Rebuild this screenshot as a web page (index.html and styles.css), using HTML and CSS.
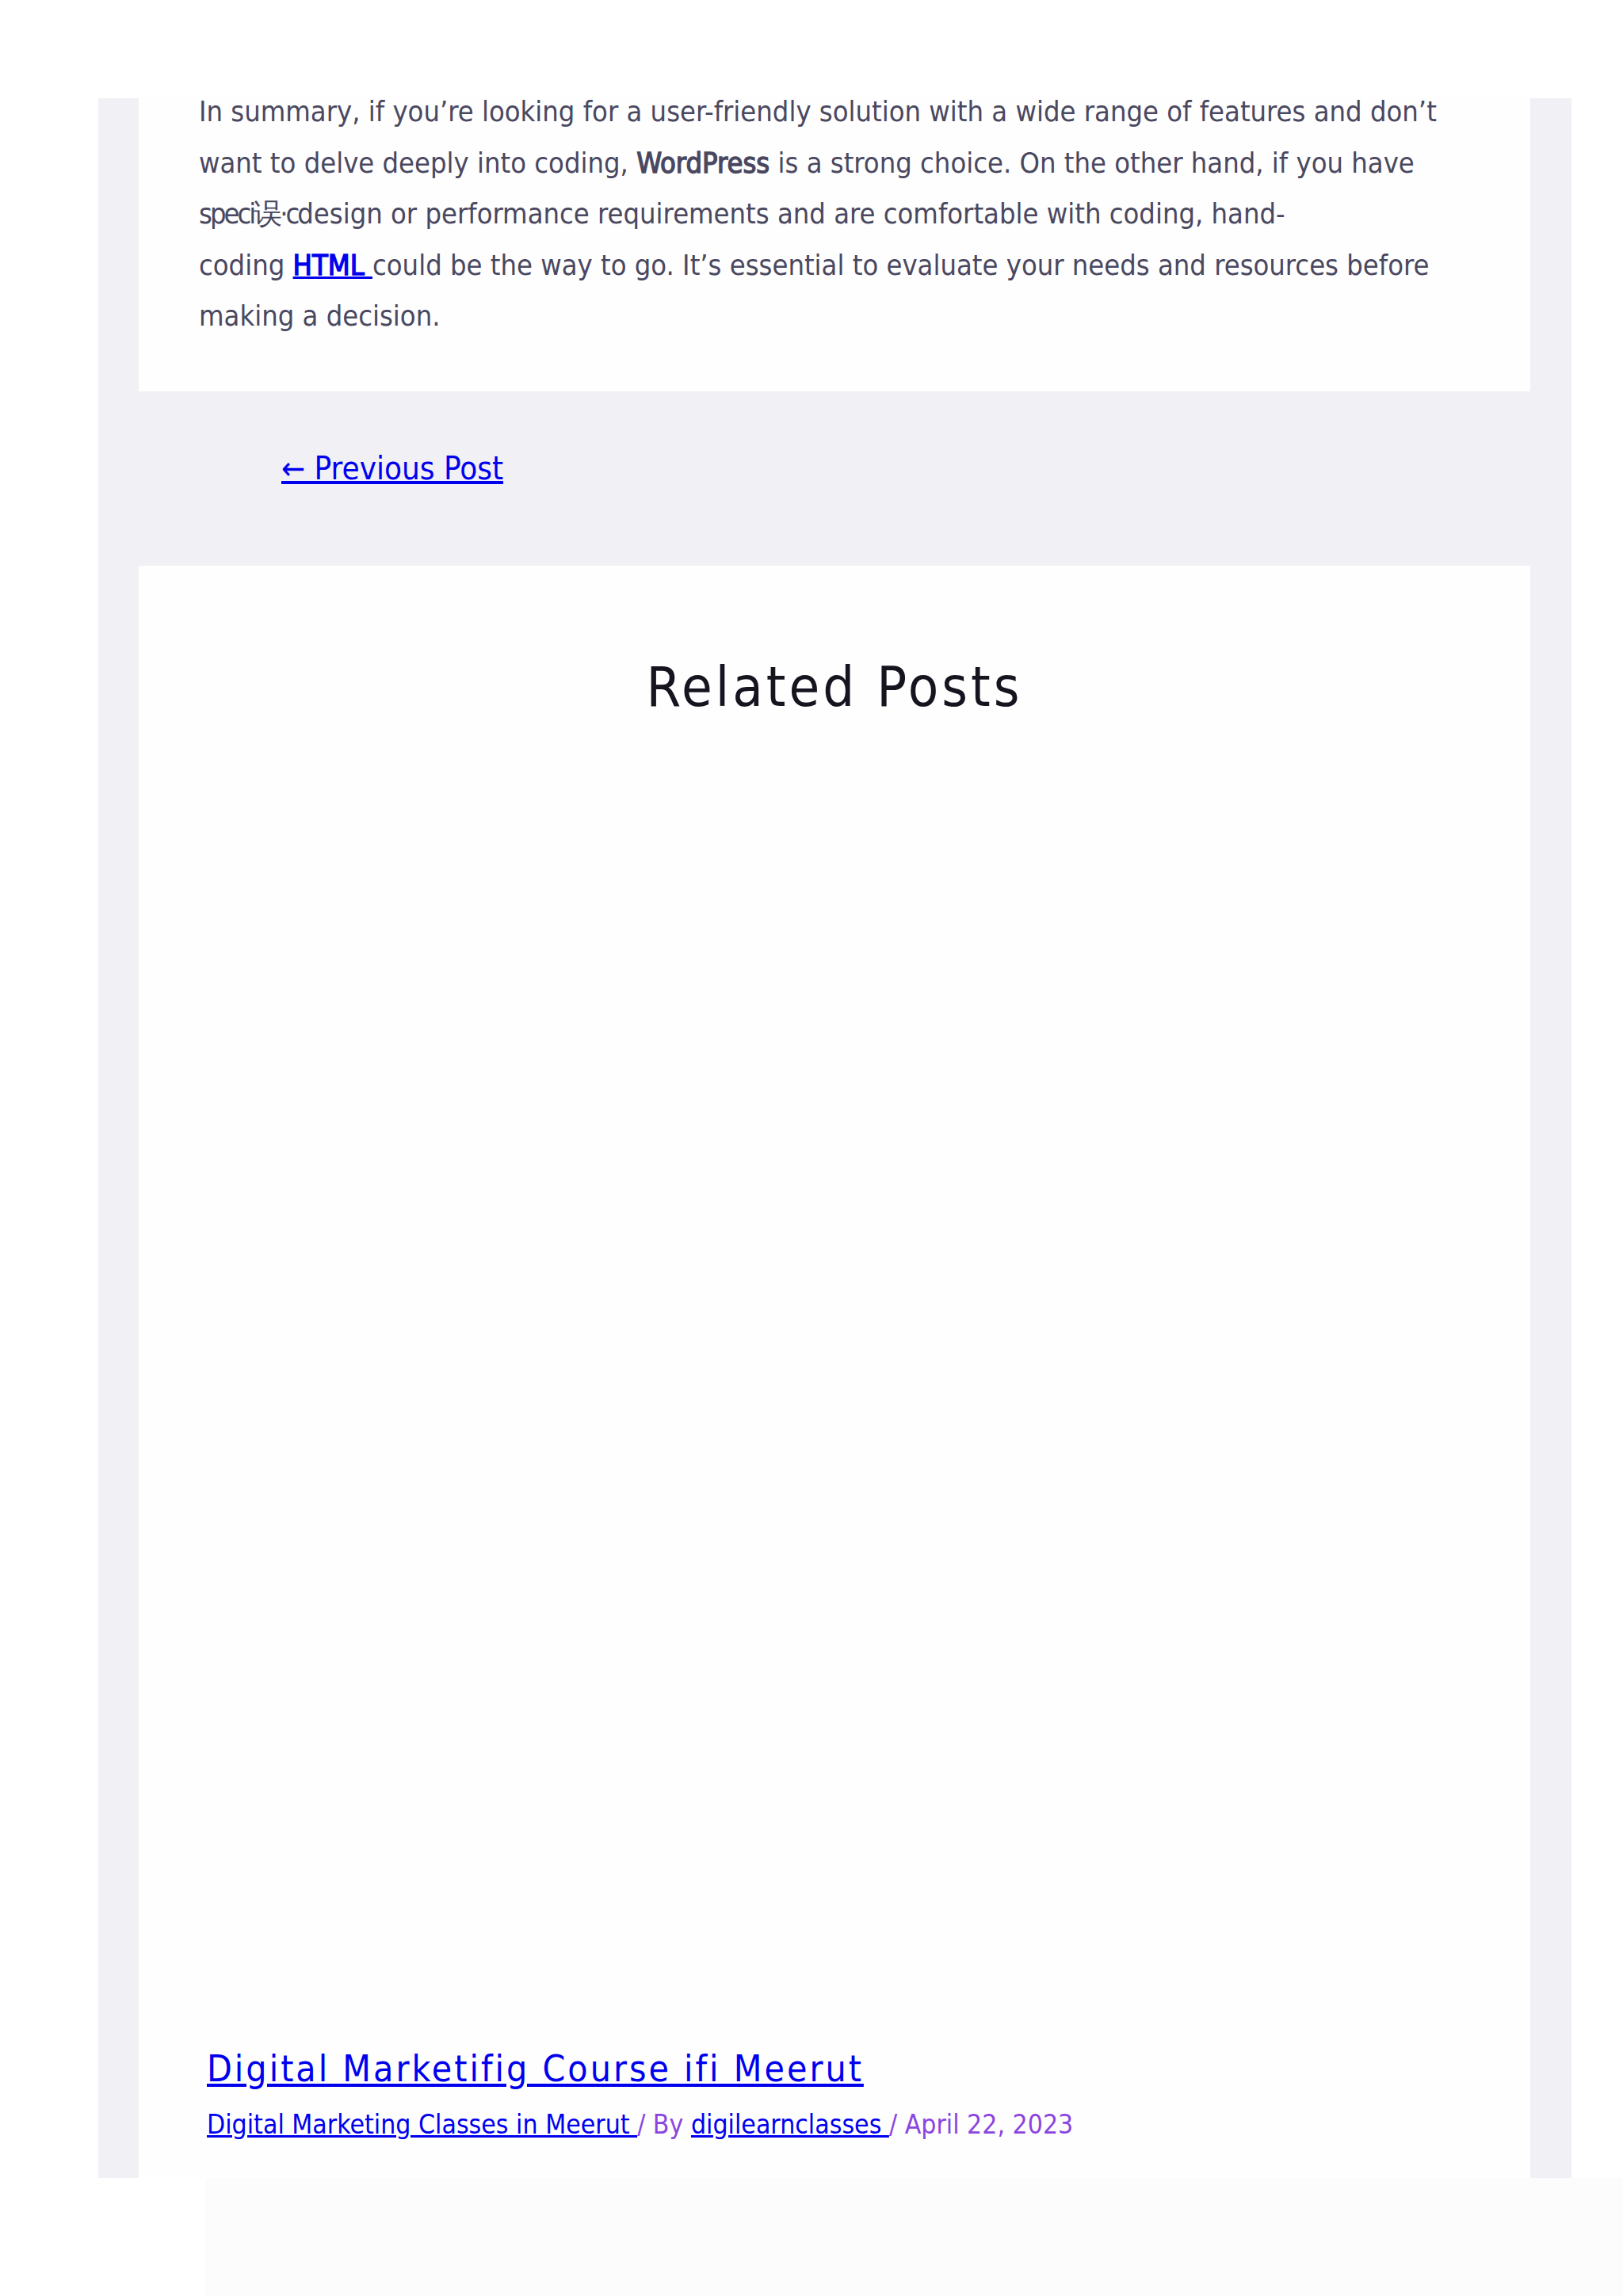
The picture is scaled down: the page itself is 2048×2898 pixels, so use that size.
FILE: index.html
```html
<!DOCTYPE html>
<html lang="en">
<head>
<meta charset="utf-8">
<title>Related Posts</title>
<link rel="stylesheet" href="styles.css">
</head>
<body>
<div class="site">
  <div class="site-content">
    <article class="post-card">
      <div class="entry-content">
        <p>In summary, if you’re looking for a user-friendly solution with a wide range of features and don’t want to delve deeply into coding, <strong>WordPress</strong> is a strong choice. On the other hand, if you have <span class="glyph-run">speci误·c</span>design or performance requirements and are comfortable with coding, hand-<br>coding <a href="#"><strong>HTML </strong></a>could be the way to go. It’s essential to evaluate your needs and resources before making a decision.</p>
      </div>
    </article>

    <nav class="post-navigation">
      <a href="#" class="nav-prev">← Previous Post</a>
    </nav>

    <section class="related-posts">
      <h2 class="related-heading">Related Posts</h2>
      <div class="related-item">
        <div class="related-thumb"></div>
        <h3 class="related-title"><a href="#">Digital Marketifig Course ifi Meerut</a></h3>
        <div class="related-meta"><a href="#">Digital Marketing Classes in Meerut </a>/ By <a href="#">digilearnclasses </a>/ April 22, 2023</div>
      </div>
    </section>
  </div>
  <div class="below-strip"></div>
</div>
</body>
</html>
```

FILE: styles.css
```css
html, body {
  margin: 0;
  padding: 0;
  background: #ffffff;
}

body {
  font-family: "DejaVu Sans Condensed", "DejaVu Sans", sans-serif;
  font-stretch: condensed;
  color: #4a4860;
}

a {
  color: #0000ee;
}

.site {
  padding-top: 124px;
}

/* grey page area holding the cards */
.site-content {
  display: flow-root;
  background: #f1f0f5;
  margin: 0 65px 0 124px;
  padding: 0 52px 0 51px;
}

.post-card {
  display: flow-root;
  background: #fefefe;
  padding: 0 76px 62px 76px;
}

.entry-content p {
  margin: -15px 0 0 0;
  font-size: 36px;
  line-height: 64.6px;
}

/* the body face has no heavy cut here: thicken the regular strokes instead */
.entry-content strong {
  font-weight: normal;
  -webkit-text-stroke: 1.3px currentColor;
}

.glyph-run {
  letter-spacing: -3px;
}

/* previous / next navigation */
.post-navigation {
  padding: 63px 0 89px 180px;
}

.nav-prev {
  font-size: 40px;
  line-height: 68px;
}

/* related posts block */
.related-posts {
  background: #fefefe;
  padding: 111px 76px 43px 76px;
}

.related-heading {
  margin: 0;
  text-align: center;
  font-size: 70px;
  line-height: 85px;
  font-weight: normal;
  letter-spacing: 4px;
  color: #15141f;
}

.related-item {
  padding-left: 10px;
}

.related-thumb {
  height: 1671px;
}

.related-title {
  margin: 0;
  font-size: 46px;
  line-height: 60px;
  font-weight: normal;
  letter-spacing: 3px;
}

.related-meta {
  margin-top: 17px;
  font-size: 33.5px;
  line-height: 48px;
  color: #8b45e0;
}

.below-strip {
  margin-left: 259px;
  height: 150px;
  background: #fcfcfd;
}
```
